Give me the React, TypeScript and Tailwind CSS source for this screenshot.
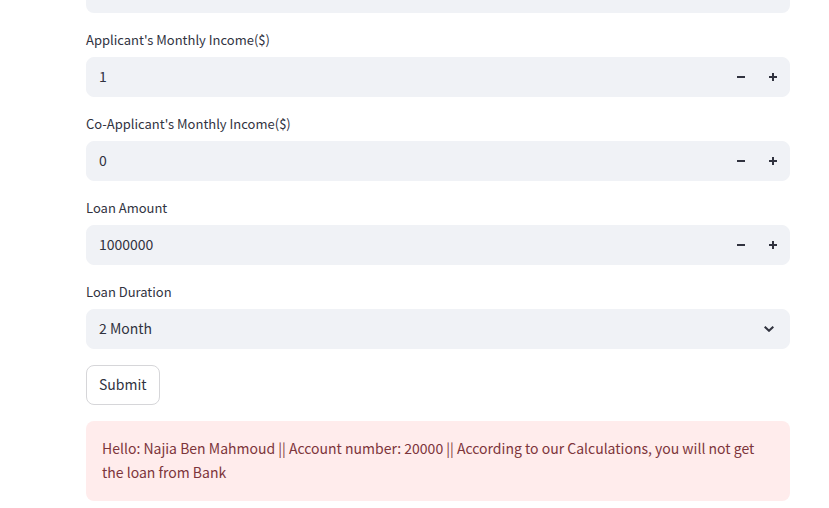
import { useState } from 'react';

const fieldBox = 'flex h-10 items-center rounded-lg border border-[#f0f2f6] bg-[#f0f2f6]';
const labelText = 'mb-1.5 flex h-[22px] items-center text-[13px] leading-5';

function MinusIcon() {
  return (
    <svg width="8" height="8" viewBox="0 0 8 8" fill="currentColor" aria-hidden="true">
      <path d="M0 3h8v2H0z" />
    </svg>
  );
}

function PlusIcon() {
  return (
    <svg width="8" height="8" viewBox="0 0 8 8" fill="currentColor" aria-hidden="true">
      <path d="M3 0h2v3h3v2H5v3H3V5H0V3h3z" />
    </svg>
  );
}

function NumberField({ id, label, initial }: { id: string; label: string; initial: number }) {
  const [value, setValue] = useState(initial);
  return (
    <div>
      <label htmlFor={id} className={labelText}>
        {label}
      </label>
      <div className={fieldBox}>
        <input
          id={id}
          type="number"
          value={value}
          onChange={(event) => setValue(Number(event.target.value))}
          className="h-full min-w-0 flex-1 bg-transparent px-3 pb-0.5 text-sm leading-6 outline-none [appearance:textfield] [&::-webkit-inner-spin-button]:appearance-none"
        />
        <button
          type="button"
          aria-label={`Decrease ${label}`}
          onClick={() => setValue(value - 1)}
          className="flex h-full w-8 items-center justify-center"
        >
          <MinusIcon />
        </button>
        <button
          type="button"
          aria-label={`Increase ${label}`}
          onClick={() => setValue(value + 1)}
          className="flex h-full w-8 items-center justify-center"
        >
          <PlusIcon />
        </button>
      </div>
    </div>
  );
}

export default function App() {
  return (
    <main className="min-h-screen bg-white pr-[39px] pb-2 pl-[86px] font-['Noto_Sans_CJK_SC',sans-serif] text-[#31333f]">
      <form className="flex flex-col gap-4" onSubmit={(event) => event.preventDefault()}>
        <div className="h-[13px] rounded-b-lg bg-[#f0f2f6]" />
        <NumberField id="applicant-income" label="Applicant's Monthly Income($)" initial={1} />
        <NumberField id="co-applicant-income" label="Co-Applicant's Monthly Income($)" initial={0} />
        <NumberField id="loan-amount" label="Loan Amount" initial={1000000} />
        <div>
          <label htmlFor="loan-duration" className={labelText}>
            Loan Duration
          </label>
          <div className={`${fieldBox} relative`}>
            <select
              id="loan-duration"
              defaultValue="2 Month"
              className="h-full w-full appearance-none bg-transparent px-3 pb-0.5 text-sm leading-6 outline-none"
            >
              <option>2 Month</option>
            </select>
            <svg
              className="pointer-events-none absolute right-[15px]"
              width="10"
              height="6"
              viewBox="0 0 10 6"
              fill="none"
              stroke="currentColor"
              strokeWidth="2"
              aria-hidden="true"
            >
              <path d="M0.7 0.7L5 4.8L9.3 0.7" />
            </svg>
          </div>
        </div>
        <button
          type="submit"
          className="h-10 self-start rounded-lg border border-[#d6d6d9] bg-white px-3 pb-0.5 text-sm leading-6"
        >
          Submit
        </button>
        <div role="alert" className="rounded-lg bg-[#ffecec] px-4 pt-[15px] pb-[17px] text-sm leading-6 text-[#7d353b]">
          Hello: Najia Ben Mahmoud || Account number: 20000 || According to our Calculations, you will not get
          the loan from Bank
        </div>
      </form>
    </main>
  );
}
